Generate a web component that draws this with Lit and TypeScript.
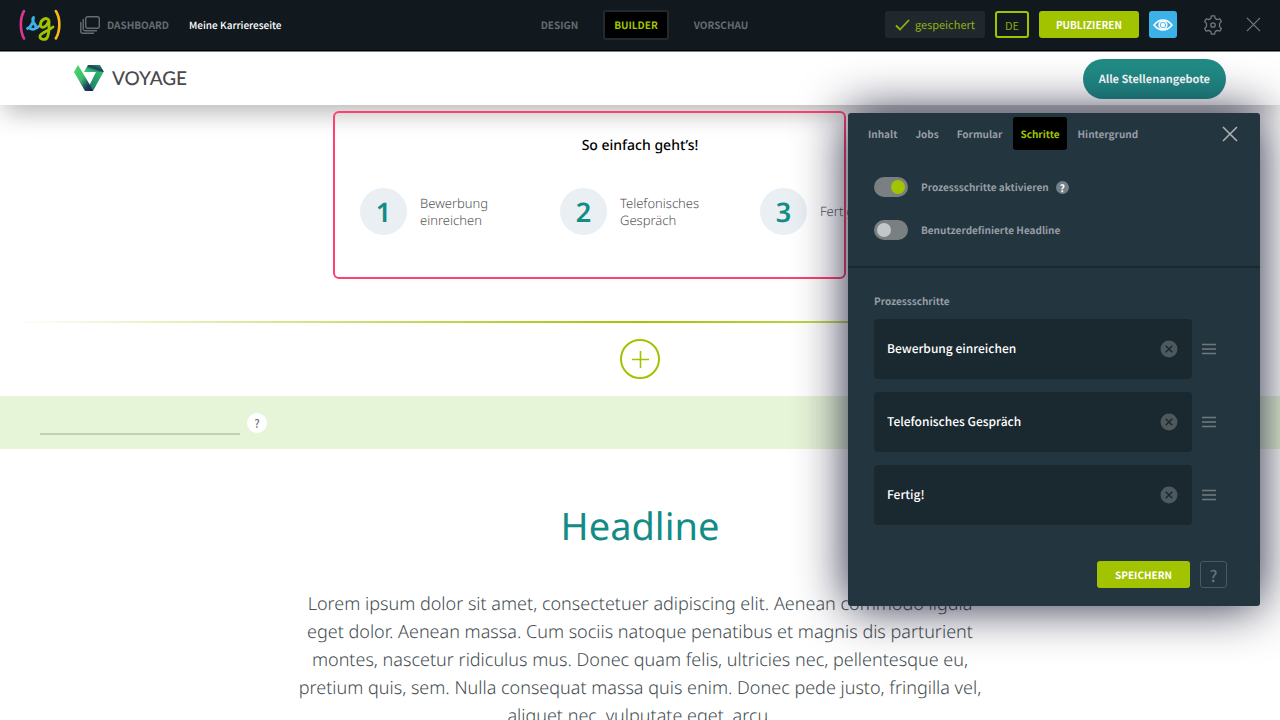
import { LitElement, html, css, svg } from "lit";
import { customElement, state } from "lit/decorators.js";

const cross = (cls: string) => html`
  <svg class=${cls} viewBox="0 0 16 16" fill="none" stroke="currentColor" aria-hidden="true">
    <path d="M1 1 15 15M15 1 1 15" />
  </svg>`;

@customElement("app-topbar")
export class AppTopbar extends LitElement {
  static styles = css`
    :host {
      display: grid;
      grid-template-columns: 1fr auto 1fr;
      align-items: center;
      box-sizing: border-box;
      height: 52px;
      padding: 0 10px 2px 19px;
      background: #11191f;
      border-bottom: 1px solid #7d8184;
      box-shadow: inset 0 -1px #000;
      position: relative;
      z-index: 3;
      font-size: 10px;
      line-height: 16px;
      font-weight: 700;
    }
    .left, .nav, .right { display: flex; align-items: center; white-space: nowrap; }
    .right { justify-content: flex-end; gap: 10px; }
    .nav { gap: 14px; }
    a { color: #666c70; text-decoration: none; }
    button { font: inherit; border: 0; margin: 0; cursor: pointer; box-sizing: border-box; }
    .logo { width: 42px; height: 34px; display: block; margin-right: 19px; }
    .dash { display: flex; align-items: center; gap: 7px; margin-right: 20px; }
    .stack { width: 20px; height: 18px; }
    .title { color: #fff; font-weight: 500; }
    .nav a { padding: 5px 9px; border: 2px solid transparent; border-radius: 3px; }
    .nav a.current { background: #000; border-color: #22292f; color: #a2c400; }
    .saved {
      display: flex; align-items: center; gap: 5px; height: 27px; padding: 0 10px;
      background: #20282e; border-radius: 3px; color: #93b010; font-size: 11px; font-weight: 400;
    }
    .check { width: 15px; height: 12px; }
    .lang { width: 34px; height: 27px; padding: 0; background: transparent; border: 2px solid #a2c400; border-radius: 3px; color: #8ba80f; font-size: 11px; font-weight: 400; }
    .publish { height: 27px; padding: 0 17px; background: #a2c400; border-radius: 3px; color: #fff; }
    .eye { width: 28px; height: 27px; padding: 0; background: #3cb1e8; border-radius: 3px; color: #fff; display: grid; place-items: center; }
    .eye svg { width: 20px; height: 14px; }
    .tool { width: 34px; height: 34px; padding: 0; background: transparent; color: #73797d; display: grid; place-items: center; }
    .gear { width: 20px; height: 20px; }
    .x { width: 15px; height: 15px; stroke-width: 1.3; }
    .tools { display: flex; gap: 6px; margin-left: 9px; }
  `;

  render() {
    return html`
      <div class="left">
        <svg class="logo" viewBox="0 0 42 34" fill="none" stroke-linecap="round" stroke-linejoin="round" role="img" aria-label="sg">
          <path stroke="#e0368c" stroke-width="2.6" d="M5 3C.8 10 .8 22.500 5 30.500" />
          <path stroke="#fdb913" stroke-width="2.600" d="M36.800 3C41.500 10 41.500 22.500 36.800 30.500" />
          <path stroke="#3cb1e8" stroke-width="2.800" d="M8.500 20.500C12 18.500 14.500 14 14.500 9.500C12 12 15 15 16.500 17.500C18 20.500 15 22.500 11 20.500M16.500 20.500Q18.500 20 20 18" />
          <path stroke="#a2c400" stroke-width="2.800" d="M30 12.500C27.500 8.500 21.500 11.500 21.500 16.500C21.500 21 27 20.500 30 12.500C30 18.500 30.500 24.500 28.500 29C26.500 33 20.500 31.500 21 28C21.500 25 28.500 23.500 34 19" />
        </svg>
        <a class="dash" href="#dashboard">
          <svg class="stack" viewBox="0 0 20 18" fill="none" stroke="currentColor" stroke-width="1.4" stroke-linecap="round" aria-hidden="true">
            <rect x="5.700" y=".7" width="13.600" height="11.600" rx="2" />
            <path d="M3.200 3.500V12.800a2 2 0 0 0 2 2H16.500M.8 6.500V15.300a2 2 0 0 0 2 2H13.500" />
          </svg>
          DASHBOARD
        </a>
        <span class="title">Meine Karriereseite</span>
      </div>
      <nav class="nav">
        <a href="#design">DESIGN</a>
        <a class="current" href="#builder" aria-current="page">BUILDER</a>
        <a href="#vorschau">VORSCHAU</a>
      </nav>
      <div class="right">
        <span class="saved">
          <svg class="check" viewBox="0 0 15 12" fill="none" stroke="currentColor" stroke-width="1.800" aria-hidden="true"><path d="M1 6.500 5 10.500 14 1" /></svg>
          gespeichert
        </span>
        <button class="lang" type="button">DE</button>
        <button class="publish" type="button">PUBLIZIEREN</button>
        <button class="eye" type="button" aria-label="Ansehen">
          <svg viewBox="0 0 20 14" fill="none" stroke="currentColor" stroke-width="1.600" aria-hidden="true">
            <path d="M1 7C4 3.300 7 2 10 2s6 1.300 9 5c-3 3.700-6 5-9 5S4 10.700 1 7Z" />
            <circle cx="10" cy="7" r="3.800" /><circle cx="10" cy="7" r="1.400" fill="currentColor" />
          </svg>
        </button>
        <div class="tools">
          <button class="tool" type="button" aria-label="Einstellungen">
            <svg class="gear" viewBox="0 0 20 20" fill="none" stroke="currentColor" stroke-width="1.300" stroke-linejoin="round" aria-hidden="true">
              <path d="M8.400.8h3.200l.6 2.600 2.100 1.200 2.500-.8 1.600 2.800-1.900 1.800v3.200l1.900 1.800-1.600 2.800-2.500-.8-2.100 1.200-.6 2.600H8.400l-.6-2.600-2.100-1.200-2.500.8-1.600-2.800 1.900-1.800V8.400L1.600 6.600l1.600-2.800 2.500.8 2.100-1.200Z" />
              <circle cx="10" cy="10" r="2.200" />
            </svg>
          </button>
          <button class="tool" type="button" aria-label="Schließen">${cross("x")}</button>
        </div>
      </div>
    `;
  }
}

@customElement("career-page")
export class CareerPage extends LitElement {
  static styles = css`
    :host { display: block; font-family: "Noto Sans", sans-serif; background: #fff; }
    button { font: inherit; margin: 0; cursor: pointer; }
    .brandbar {
      display: flex; justify-content: space-between; align-items: center;
      height: 53px; padding: 0 54px 0 74px; background: #fff; position: relative; z-index: 1; box-sizing: border-box;
      box-shadow: 0 12px 24px -4px rgba(0, 0, 0, 0.28);
    }
    .brand { display: flex; align-items: center; gap: 8px; color: #4a4a4c; font: 500 19px/24px Lato, sans-serif; text-decoration: none; }
    .mark { width: 30px; height: 27px; }
    .all {
      height: 40px; padding: 0 16px; border-radius: 20px; background: #218b85; color: #fff;
      font: 700 11px/16px "Noto Sans CJK SC", sans-serif; text-decoration: none; display: flex; align-items: center;
    }
    .steps { position: relative; width: 600px; margin: 0 auto; padding-top: 31px; height: 185px; }
    .steps h3 { margin: 0 0 32px; text-align: center; font-size: 14px; line-height: 20px; font-weight: 500; color: #000; }
    .list { display: grid; grid-template-columns: repeat(3, 1fr); list-style: none; margin: 0; padding: 0; }
    .list li { display: flex; align-items: center; gap: 13px; padding-left: 20px; font-size: 13px; line-height: 17px; font-weight: 300; color: #555; }
    .num { flex: none; width: 47px; height: 47px; border-radius: 50%; background: #e9eff3; color: #128c85; display: grid; place-items: center; font-size: 27px; font-weight: 600; }
    .label { width: 100px; }
    .highlight { position: absolute; left: -7px; top: 6px; width: 513px; height: 168px; box-sizing: border-box; border: 2px solid #ff4070; border-radius: 6px; pointer-events: none; z-index: 1; }
    .rule { height: 2px; background: linear-gradient(90deg, rgba(162, 196, 0, 0) 1%, #a2c400 50%, rgba(162, 196, 0, 0) 99%); }
    .add { display: grid; place-items: center; width: 40px; height: 40px; margin: 16px auto 17px; padding: 0; border: 2px solid #a2c400; border-radius: 50%; background: #fff; color: #a2c400; }
    .add svg { width: 17px; height: 17px; }
    .band { display: flex; align-items: center; gap: 7px; height: 53px; padding: 0 40px; background: #e6f4d7; }
    .band input { width: 200px; height: 25px; box-sizing: border-box; border: 0; border-bottom: 2px solid #c3d0b9; background: transparent; padding: 0; outline: 0; font: inherit; }
    .help { width: 20px; height: 20px; border: 0; border-radius: 50%; padding: 0; background: #fff; color: #666c72; font: 500 11px/20px "Noto Sans CJK SC", sans-serif; }
    .text { max-width: 692px; margin: 0 auto; text-align: center; }
    .text h2 { margin: 51px 0 38px; font-size: 38px; line-height: 52px; font-weight: 400; color: #128c85; }
    .text p { margin: 0; font-size: 18px; line-height: 28px; font-weight: 300; color: #454d52; }
  `;

  private steps = ["Bewerbung einreichen", "Telefonisches Gespräch", "Fertig!"];

  render() {
    return html`
      <header class="brandbar">
        <a class="brand" href="#start">
          <svg class="mark" viewBox="0 0 30 27" aria-hidden="true">
            <defs>
              <linearGradient id="a" x1="0" y1="0" x2=".9" y2="1"><stop offset="0" stop-color="#4fdc68" /><stop offset=".5" stop-color="#3bbb6c" /><stop offset=".8" stop-color="#1f3f5c" /><stop offset="1" stop-color="#1c1f52" /></linearGradient>
              <linearGradient id="b" x1="0" y1="1" x2="1" y2="0"><stop offset="0" stop-color="#3bd070" /><stop offset=".35" stop-color="#2aa86c" /><stop offset=".55" stop-color="#1d3f5c" /><stop offset="1" stop-color="#2db56c" /></linearGradient>
              <linearGradient id="c" x1="1" y1="0" x2="0" y2="1"><stop offset="0" stop-color="#2fc46b" /><stop offset=".5" stop-color="#25966c" /><stop offset="1" stop-color="#1f6a66" /></linearGradient>
            </defs>
            <path fill="url(#c)" d="M22 7H29.500L19 26H12L16 19Z" />
            <path fill="url(#a)" d="M4 0 16 20 19 26H11L0 7Z" />
            <path fill="url(#b)" d="M14 0H26L30 7H10Z" />
          </svg>
          VOYAGE
        </a>
        <a class="all" href="#jobs">Alle Stellenangebote</a>
      </header>
      <section class="steps">
        <h3>So einfach geht’s!</h3>
        <ol class="list">
          ${this.steps.map((s, i) => html`<li><span class="num">${i + 1}</span><span class="label">${s}</span></li>`)}
        </ol>
        <div class="highlight"></div>
      </section>
      <div class="rule"></div>
      <button class="add" type="button" aria-label="Element hinzufügen">
        <svg viewBox="0 0 17 17" stroke="currentColor" stroke-width="1.600" aria-hidden="true"><path d="M8.500 0V17M0 8.500H17" /></svg>
      </button>
      <div class="band">
        <input type="text" aria-label="Abschnitt" />
        <button class="help" type="button">?</button>
      </div>
      <section class="text">
        <h2>Headline</h2>
        <p>
          Lorem ipsum dolor sit amet, consectetuer adipiscing elit. Aenean commodo ligula eget dolor. Aenean massa. Cum
          sociis natoque penatibus et magnis dis parturient montes, nascetur ridiculus mus. Donec quam felis, ultricies
          nec, pellentesque eu, pretium quis, sem. Nulla consequat massa quis enim. Donec pede justo, fringilla vel,
          aliquet nec, vulputate eget, arcu.
        </p>
      </section>
    `;
  }
}

@customElement("step-panel")
export class StepPanel extends LitElement {
  static styles = css`
    :host {
      display: block; box-sizing: border-box; width: 412px; background: #23353f; border-radius: 3px;
      box-shadow: 0 0 50px rgba(10, 10, 40, 0.9); color: #979ea5; font-size: 10px; line-height: 16px; font-weight: 700;
      padding-bottom: 18px;
    }
    button { font: inherit; text-rendering: inherit; margin: 0; padding: 0; border: 0; background: transparent; color: inherit; cursor: pointer; box-sizing: border-box; }
    .tabs { display: flex; align-items: center; gap: 4px; padding: 4px 20px 0 13px; }
    .tab { height: 33px; padding: 0 7px; border-radius: 3px; }
    .tab.active { background: #000; color: #a2c400; }
    .close { display: grid; place-items: center; width: 20px; height: 33px; margin-left: auto; color: #aeb4b8; }
    .x { width: 16px; height: 16px; stroke-width: 1.5; }
    .options { display: grid; gap: 23px; padding: 27px 26px 26px; border-bottom: 2px solid #1a2931; }
    .option { display: flex; align-items: center; gap: 13px; height: 20px; }
    .switch { appearance: none; flex: none; width: 34px; height: 20px; margin: 0; padding: 3px; box-sizing: border-box; border-radius: 10px; background: #7a8081; display: flex; cursor: pointer; }
    .switch::before { content: ""; width: 14px; height: 14px; border-radius: 50%; background: #c3c7c9; }
    .switch:checked { justify-content: flex-end; }
    .switch:checked::before { background: #a2c400; }
    .info { width: 13px; height: 13px; margin-left: -6px; border-radius: 50%; background: #757f8a; color: #fff; line-height: 13px; }
    .group { padding: 25px 26px 0; }
    .caption { margin: 0 0 10px; font: inherit; }
    .items { display: grid; gap: 13px; }
    .row { display: grid; grid-template-columns: 1fr 16px; align-items: center; gap: 10px; padding-right: 16px; }
    .box { display: flex; align-items: center; height: 60px; padding: 0 14px 0 13px; background: #1a282f; border-radius: 4px; box-sizing: border-box; }
    .box input { flex: 1; min-width: 0; height: 24px; padding: 0; border: 0; outline: 0; background: transparent; color: #fff; font: 500 12px/24px "Noto Sans CJK SC", sans-serif; text-rendering: inherit; }
    .remove { width: 18px; height: 18px; }
    .remove svg, .grip svg { display: block; width: 100%; height: 100%; }
    .grip { width: 14px; height: 12px; color: #6d777e; }
    .foot { display: flex; justify-content: flex-end; gap: 10px; padding: 36px 33px 0; }
    .save { height: 27px; padding: 0 18px; border-radius: 3px; background: #a2c400; color: #fff; }
    .what { width: 27px; height: 27px; border: 1px solid #4a5a63; border-radius: 3px; color: #66747c; font-size: 16px; font-weight: 500; }
  `;

  @state() private active = "Schritte";
  private tabs = ["Inhalt", "Jobs", "Formular", "Schritte", "Hintergrund"];
  private items = ["Bewerbung einreichen", "Telefonisches Gespräch", "Fertig!"];

  render() {
    return html`
      <div class="tabs">
        ${this.tabs.map((t) => html`
          <button type="button" class="tab ${t === this.active ? "active" : ""}" @click=${() => (this.active = t)}>${t}</button>`)}
        <button class="close" type="button" aria-label="Schließen">${cross("x")}</button>
      </div>
      <div class="options">
        <div class="option">
          <input class="switch" id="on" type="checkbox" checked />
          <label for="on">Prozessschritte aktivieren</label>
          <button class="info" type="button">?</button>
        </div>
        <div class="option">
          <input class="switch" id="custom" type="checkbox" />
          <label for="custom">Benutzerdefinierte Headline</label>
        </div>
      </div>
      <div class="group">
        <h4 class="caption">Prozessschritte</h4>
        <div class="items">
          ${this.items.map((value, i) => html`
            <div class="row">
              <div class="box">
                <input type="text" .value=${value} aria-label="Prozessschritt ${i + 1}" />
                <button class="remove" type="button" aria-label="Entfernen">
                  <svg viewBox="0 0 18 18" aria-hidden="true">
                    <circle cx="9" cy="9" r="8.500" fill="#4e595e" />
                    <path d="M5.700 5.700 12.300 12.300M12.300 5.700 5.700 12.300" stroke="#1a282f" stroke-width="1.500" />
                  </svg>
                </button>
              </div>
              <button class="grip" type="button" aria-label="Verschieben">
                <svg viewBox="0 0 14 12" stroke="currentColor" stroke-width="1.600" aria-hidden="true">
                  ${[1.5, 6, 10.5].map((y) => svg`<path d="M0 ${y}H14" />`)}
                </svg>
              </button>
            </div>`)}
        </div>
      </div>
      <div class="foot">
        <button class="save" type="button">SPEICHERN</button>
        <button class="what" type="button">?</button>
      </div>
    `;
  }
}

@customElement("app-root")
export class AppRoot extends LitElement {
  static styles = css`
    :host { display: block; position: relative; min-height: 100vh; background: #fff; font-family: "Noto Sans CJK SC", sans-serif; text-rendering: geometricPrecision; }
    .panel { position: absolute; top: 113px; right: 20px; z-index: 2; }
  `;

  render() {
    return html`
      <app-topbar></app-topbar>
      <career-page></career-page>
      <step-panel class="panel"></step-panel>
    `;
  }
}
